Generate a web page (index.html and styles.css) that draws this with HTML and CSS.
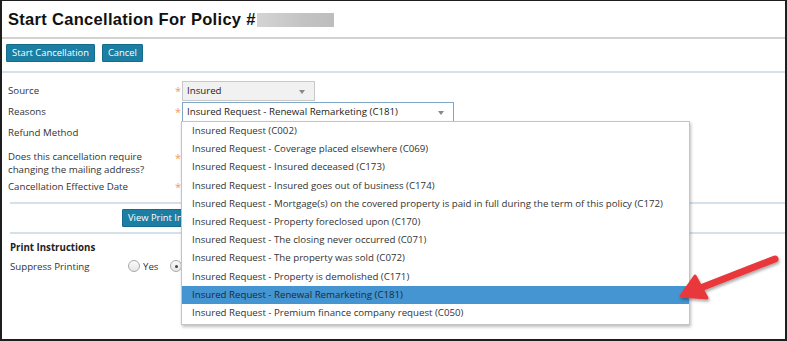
FILE: index.html
```html
<!DOCTYPE html>
<html>
<head>
<meta charset="utf-8">
<link rel="stylesheet" href="styles.css">
</head>
<body>
<div class="frame">
  <div class="head">
    <h1 class="title">Start Cancellation For Policy #</h1><span class="redact"></span>
  </div>
  <div class="toolbar">
    <button class="btn">Start Cancellation</button>
    <button class="btn">Cancel</button>
  </div>
  <div class="body">
    <div class="form">
      <div class="label">Source</div><div class="star">*</div>
      <div class="ctl"><div class="select grey">Insured<span class="caret"></span></div></div>
      <div class="label">Reasons</div><div class="star">*</div>
      <div class="ctl"><div class="select open">Insured Request - Renewal Remarketing (C181)<span class="caret"></span></div></div>
      <div class="label">Refund Method</div><div class="star"></div><div class="ctl"></div>
      <div class="label two">Does this cancellation require<br>changing the mailing address?</div><div class="star s2">*</div><div class="ctl"></div>
      <div class="label">Cancellation Effective Date</div><div class="star">*</div><div class="ctl"></div>
    </div>
    <div class="rule r1"></div>
    <div class="center"><button class="btn">View Print Instructions</button></div>
    <div class="rule"></div>
    <div class="section">
      <div class="sec-title">Print Instructions</div>
      <div class="radio-row">
        <div class="label">Suppress Printing</div>
        <div class="radios">
          <span class="radio"></span><span class="rlabel">Yes</span>
          <span class="radio checked"></span>
        </div>
      </div>
    </div>
  </div>
  <ul class="dropdown">
    <li>Insured Request (C002)</li>
    <li>Insured Request - Coverage placed elsewhere (C069)</li>
    <li>Insured Request - Insured deceased (C173)</li>
    <li>Insured Request - Insured goes out of business (C174)</li>
    <li>Insured Request - Mortgage(s) on the covered property is paid in full during the term of this policy (C172)</li>
    <li>Insured Request - Property foreclosed upon (C170)</li>
    <li>Insured Request - The closing never occurred (C071)</li>
    <li>Insured Request - The property was sold (C072)</li>
    <li>Insured Request - Property is demolished (C171)</li>
    <li class="sel">Insured Request - Renewal Remarketing (C181)</li>
    <li>Insured Request - Premium finance company request (C050)</li>
  </ul>
  <svg class="arrow" width="110" height="60" viewBox="0 0 110 60">
    <defs>
      <filter id="sh" x="-20%" y="-20%" width="140%" height="160%">
        <feDropShadow dx="1" dy="2" stdDeviation="1.5" flood-color="#000" flood-opacity="0.35"/>
      </filter>
    </defs>
    <g filter="url(#sh)">
      <line x1="100" y1="9" x2="28" y2="37" stroke="#e8383a" stroke-width="7" stroke-linecap="round"/>
      <polygon points="6,46 20,26 32,48" fill="#e8383a" stroke="#e8383a" stroke-width="3" stroke-linejoin="round"/>
    </g>
  </svg>
</div>
</body>
</html>
```
FILE: styles.css
```css
* { box-sizing: border-box; }
html, body { margin: 0; padding: 0; background: #fff; }
body { font-family: "Open Sans", "Liberation Sans", sans-serif; font-size: 9.7px; color: #333; }
.frame {
  position: relative;
  width: 787px; height: 341px;
  border: 2px solid #1e1e1e;
  border-top-width: 1px;
  overflow: hidden;
}
.head {
  display: flex; align-items: center;
  height: 38px;
  padding: 1px 6px 0 6px;
  border-bottom: 2px solid #d2d2d2;
}
.title {
  margin: 0;
  font-family: "Liberation Sans", Arial, sans-serif;
  font-weight: bold; font-size: 16.5px; letter-spacing: 0.3px;
  color: #111;
}
.redact {
  display: inline-block; width: 77px; height: 14px; margin-left: 1px; margin-top: 1px;
  background: linear-gradient(90deg, #d4d4d4, #c3c3c3 60%, #bdbdbd);
}
.toolbar {
  display: flex; gap: 7px;
  height: 34px;
  padding: 5px 4px 0 4px;
  border-bottom: 2px solid #d5e1ea;
}
.btn {
  font-family: "Open Sans", sans-serif; font-size: 9.4px;
  color: #fff; background: #1c7ea3;
  border: 1px solid #156b8c; border-radius: 1px;
  height: 18px; padding: 0 5px; line-height: 16px;
  cursor: pointer;
}
.body { padding: 7px 0 0 6px; }
.form {
  display: grid;
  grid-template-columns: 167px 7px 1fr;
  grid-template-rows: 21px 21px 20px 34px 20px;
  align-items: center;
}
.label { color: #333; line-height: 13px; }
.label.two { align-self: start; padding-top: 8px; }
.star { color: #f09a64; font-size: 11px; }
.s2 { align-self: start; padding-top: 9px; line-height: 13px; }
.select {
  position: relative;
  height: 20px; line-height: 18px;
  padding: 0 4px;
  border: 1px solid #c8c8c8;
  color: #222;
}
.select.grey { width: 133px; background: #f1f1f1; }
.select.open { width: 272px; background: #fff; border-color: #7fa8c8; }
.caret {
  position: absolute; right: 9px; top: 8px;
  border-left: 3.5px solid transparent; border-right: 3.5px solid transparent;
  border-top: 4px solid #888;
}
.rule { height: 2px; background: #d5e1ea; margin-left: 2px; }
.rule.r1 { margin-top: 6px; }
.center { display: flex; padding: 5px 0 5px 114px; }
.section { padding-top: 7px; }
.sec-title { font-weight: bold; color: #222; line-height: 14px; margin-left: 2px; }
.radio-row { display: flex; align-items: center; height: 14px; margin-top: 4px; margin-left: 2px; }
.radio-row .label { width: 118px; }
.radios { display: flex; align-items: center; }
.radio {
  display: inline-block; width: 12px; height: 12px; border-radius: 50%;
  border: 1px solid #aaa; background: linear-gradient(#fafafa, #e6e6e6);
  position: relative;
}
.radio.checked::after {
  content: ""; position: absolute; left: 3.5px; top: 3.5px; width: 3px; height: 3px;
  border-radius: 50%; background: #444;
}
.rlabel { margin: 0 12px 0 3px; }
.dropdown {
  position: absolute; left: 179px; top: 120px;
  width: 509px; margin: 0; padding: 0 0 2px 0; list-style: none;
  background: #fff;
  border: 1px solid #c4c4c4;
  box-shadow: 1px 2px 3px rgba(0,0,0,0.25);
}
.dropdown li {
  height: 18.2px; line-height: 18.2px;
  padding-left: 10px;
  color: #333; white-space: nowrap;
}
.dropdown li.sel { background: #4495d1; color: #1d2a36; }
.arrow { position: absolute; left: 673px; top: 249px; }
```
